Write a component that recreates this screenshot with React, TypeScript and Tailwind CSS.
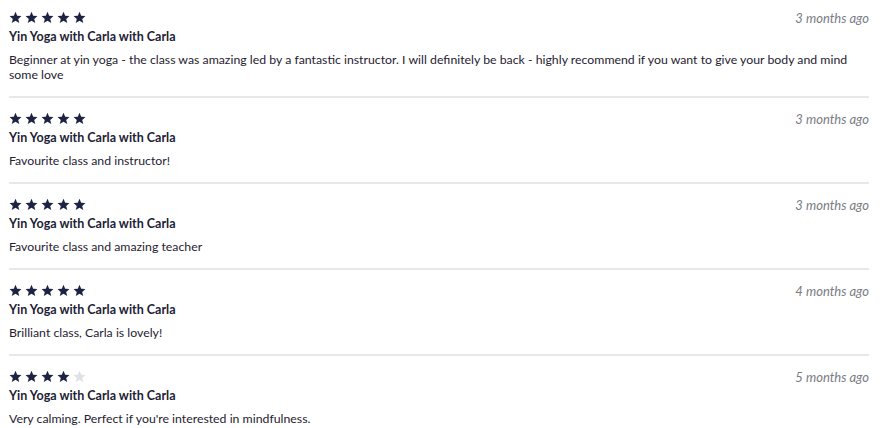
import React from 'react';

interface Review {
  rating: number;
  title: string;
  body: string;
  when: string;
}

const reviews: Review[] = [
  {
    rating: 5,
    title: 'Yin Yoga with Carla with Carla',
    body: 'Beginner at yin yoga - the class was amazing led by a fantastic instructor. I will definitely be back - highly recommend if you want to give your body and mind some love',
    when: '3 months ago',
  },
  { rating: 5, title: 'Yin Yoga with Carla with Carla', body: 'Favourite class and instructor!', when: '3 months ago' },
  { rating: 5, title: 'Yin Yoga with Carla with Carla', body: 'Favourite class and amazing teacher', when: '3 months ago' },
  { rating: 5, title: 'Yin Yoga with Carla with Carla', body: 'Brilliant class, Carla is lovely!', when: '4 months ago' },
  { rating: 4, title: 'Yin Yoga with Carla with Carla', body: "Very calming. Perfect if you're interested in mindfulness.", when: '5 months ago' },
];

const Star: React.FC<{ filled: boolean }> = ({ filled }) => (
  <svg viewBox="0 0 24 24" className={filled ? 'w-[13px] h-[13px] fill-[#1d2340]' : 'w-[13px] h-[13px] fill-[#dfe1e6]'}>
    <path d="M12 1.5l3.1 7.3 7.9.6-6 5.2 1.9 7.7L12 18.2l-6.9 4.1L7 14.6 1 9.4l7.9-.6z" />
  </svg>
);

export default function App() {
  return (
    <div className="w-[890px] h-[428px] bg-white overflow-hidden px-[9px] pt-[10px] text-[#1d2135] font-['Lato','Liberation_Sans',sans-serif]">
      <div className="w-[860px]">
        {reviews.map((r, i) => (
          <div key={i} className={i < reviews.length - 1 ? 'border-b-2 border-[#e8e8e8] pb-[14px] mb-[13px]' : ''}>
            <div className="flex items-start justify-between">
              <div className="flex gap-[3px] pt-[1px]">
                {[0, 1, 2, 3, 4].map((n) => (
                  <Star key={n} filled={n < r.rating} />
                ))}
              </div>
              <span className="italic text-[13px] text-[#7a7c85] leading-[16px]">{r.when}</span>
            </div>
            <div className="mt-[2px] text-[12.5px] font-bold leading-[18px]">{r.title}</div>
            <p className="mt-[6px] text-[12.3px] leading-[15px] text-[#1f2233]">{r.body}</p>
          </div>
        ))}
      </div>
    </div>
  );
}
